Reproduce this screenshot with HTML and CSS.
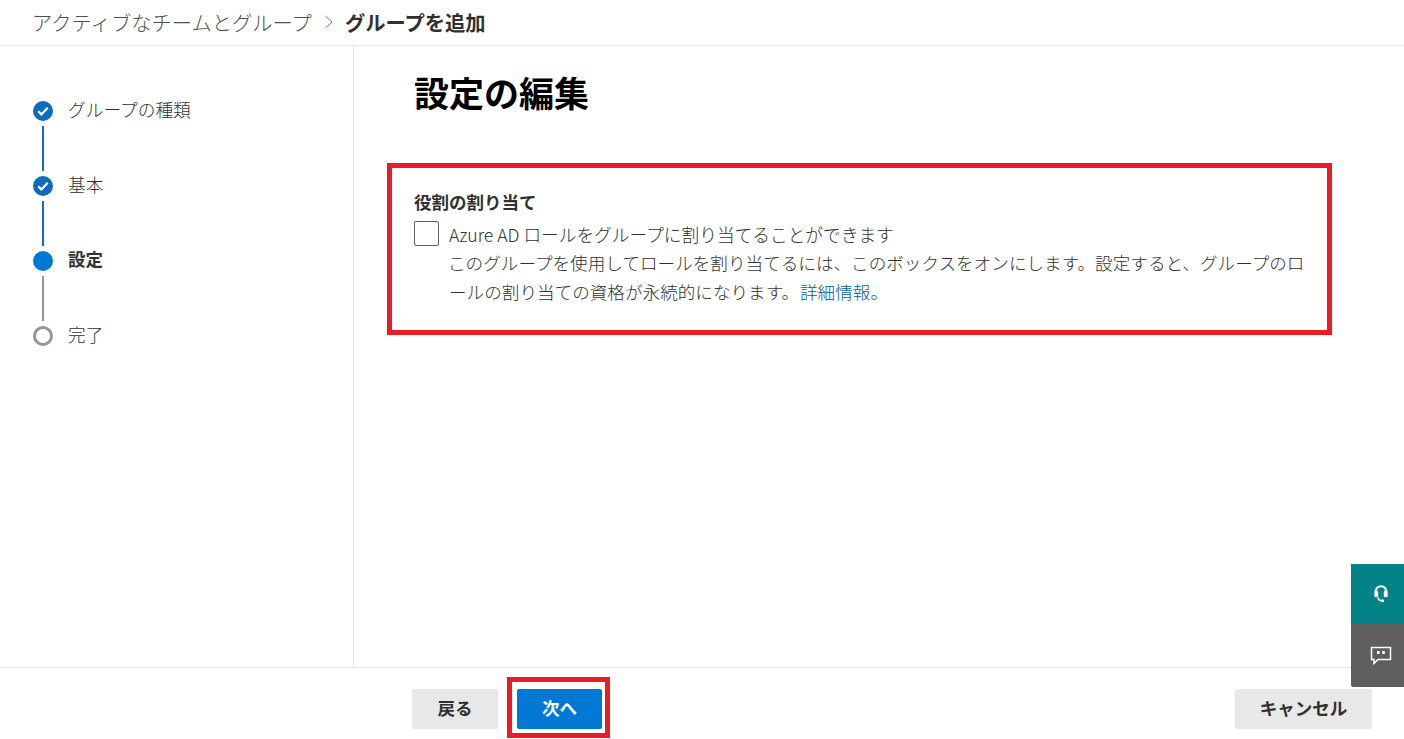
FILE: index.html
```html
<!DOCTYPE html>
<html lang="ja">
<head>
<meta charset="utf-8">
<title>グループを追加</title>
<link rel="stylesheet" href="styles.css">
</head>
<body>
<div class="app">
  <header class="crumbs">
    <span class="crumb-link">アクティブなチームとグループ</span>
    <svg class="crumb-sep" width="10" height="14" viewBox="0 0 10 14"><path d="M1.5 1l6.5 6-6.5 6" fill="none" stroke="#777" stroke-width="1"/></svg>
    <span class="crumb-current">グループを追加</span>
  </header>
  <div class="middle">
    <nav class="steps">
      <div class="step done">
        <span class="dot"><svg width="14" height="14" viewBox="0 0 14 14"><path d="M2.2 7.2l3.2 3.2 6.3-6.6" fill="none" stroke="#fff" stroke-width="2.2"/></svg></span>
        <span class="label">グループの種類</span>
      </div>
      <div class="line blue"></div>
      <div class="step done">
        <span class="dot"><svg width="14" height="14" viewBox="0 0 14 14"><path d="M2.2 7.2l3.2 3.2 6.3-6.6" fill="none" stroke="#fff" stroke-width="2.2"/></svg></span>
        <span class="label">基本</span>
      </div>
      <div class="line blue"></div>
      <div class="step current">
        <span class="dot"></span>
        <span class="label">設定</span>
      </div>
      <div class="line grey"></div>
      <div class="step todo">
        <span class="dot"></span>
        <span class="label">完了</span>
      </div>
    </nav>
    <main class="content">
      <h1 class="title">設定の編集</h1>
      <section class="highlight">
        <h2 class="field-title">役割の割り当て</h2>
        <div class="check-row">
          <span class="checkbox"></span>
          <div class="check-text">
            <div class="check-label">Azure AD ロールをグループに割り当てることができます</div>
            <p class="check-desc">このグループを使用してロールを割り当てるには、このボックスをオンにします。設定すると、グループのロールの割り当ての資格が永続的になります。 <a class="link">詳細情報。</a></p>
          </div>
        </div>
      </section>
    </main>
  </div>
  <footer class="footer">
    <div class="nav-buttons">
      <button class="btn">戻る</button>
      <span class="next-mark"><button class="btn primary">次へ</button></span>
    </div>
    <button class="btn cancel">キャンセル</button>
  </footer>
  <div class="side-tabs">
    <div class="tab teal">
      <svg width="18" height="22" viewBox="0 0 18 22"><path d="M3.6 14V8.6a5.4 5.4 0 0 1 10.8 0V14" fill="none" stroke="#fff" stroke-width="2"/><rect x="2.6" y="7.6" width="3.6" height="6.6" rx="1.4" fill="#fff"/><rect x="11.8" y="7.6" width="3.6" height="6.6" rx="1.4" fill="#fff"/><path d="M6 14.4c.3 2.4 1.6 3.4 4 3.4" fill="none" stroke="#fff" stroke-width="1.6"/><circle cx="10.6" cy="17.8" r="1.5" fill="#fff"/></svg>
    </div>
    <div class="tab grey-tab">
      <svg width="22" height="20" viewBox="0 0 22 20"><path d="M1.5 1.5h19v12H8l-4 4v-4H1.5z" fill="none" stroke="#fff" stroke-width="1.5"/><rect x="7" y="5" width="2.6" height="3" fill="#fff"/><rect x="12.2" y="5" width="2.6" height="3" fill="#fff"/></svg>
    </div>
  </div>
</div>
</body>
</html>
```
FILE: styles.css
```css
* { box-sizing: border-box; }
html, body { margin: 0; height: 100%; }
body {
  font-family: "Noto Sans CJK JP", "Noto Sans", sans-serif;
  color: #323130;
  background: #fff;
  overflow: hidden;
}
.app {
  position: relative;
  height: 739px;
  display: flex;
  flex-direction: column;
}
.crumbs {
  height: 46px;
  flex: none;
  border-bottom: 1px solid #e6e6e6;
  display: flex;
  align-items: center;
  padding: 0 0 2px 32px;
  font-size: 20.3px;
  line-height: 28px;
}
.crumb-link { color: #4f4e4d; font-weight: 300; }
.crumb-sep { margin: 0 11px 0 12px; }
.crumb-current { font-weight: 700; }
.middle { flex: 1; display: flex; min-height: 0; }
.steps {
  width: 354px;
  flex: none;
  border-right: 1px solid #e6e6e6;
  padding: 55px 0 0 33px;
  display: flex;
  flex-direction: column;
}
.step { display: flex; align-items: center; height: 20px; }
.dot {
  width: 20px;
  height: 20px;
  border-radius: 50%;
  background: #0f6cbd;
  display: flex;
  align-items: center;
  justify-content: center;
  flex: none;
}
.current .dot { background: #0078d4; }
.todo .dot { background: #fff; border: 3px solid #979593; }
.label {
  margin-left: 15px;
  font-size: 17.7px;
  line-height: 20px;
  font-weight: 300;
  position: relative;
  top: -2px;
}
.current .label { font-weight: 700; font-size: 17.5px; }
.line { width: 2px; height: 45px; margin: 5px 0 5px 9px; }
.line.blue { background: #106ebe; }
.line.grey { background: #979593; }
.content { flex: 1; padding: 0 0 0 33px; min-width: 0; }
.title {
  margin: 21px 0 0 27px;
  font-size: 35px;
  line-height: 50px;
  font-weight: 700;
  color: #000;
}
.highlight {
  width: 945px;
  height: 172px;
  margin-top: 46px;
  border: 5px solid #ed1c24;
  padding: 21px 22px 0;
}
.field-title {
  margin: 0;
  font-size: 17.5px;
  line-height: 25px;
  font-weight: 700;
}
.check-row { display: flex; margin-top: 6px; }
.checkbox {
  width: 25px;
  height: 25px;
  flex: none;
  border: 1px solid #605e5c;
  border-radius: 2px;
  margin-top: 1px;
}
.check-text { margin-left: 10px; width: 860px; }
.check-label {
  font-size: 17.7px;
  line-height: 29px;
  font-weight: 300;
}
.check-desc {
  margin: 0;
  font-size: 17.6px;
  line-height: 28.5px;
  font-weight: 300;
  text-indent: -1px;
}
.link { color: #005a9e; font-weight: 300; margin-left: -3px; }
.footer {
  height: 72px;
  flex: none;
  border-top: 1px solid #e6e6e6;
  display: flex;
  align-items: flex-start;
  justify-content: space-between;
  padding: 21px 32px 0 412px;
}
.nav-buttons { display: flex; align-items: flex-start; gap: 19px; }
.btn {
  width: 86px;
  height: 40px;
  border: none;
  border-radius: 2px;
  background: #e8e8e8;
  color: #323130;
  font-family: inherit;
  font-size: 17.5px;
  font-weight: 700;
  padding: 0 0 3px;
}
.btn.primary { background: #0078d4; color: #fff; display: block; width: 85px; }
.btn.cancel { width: 137px; }
.next-mark {
  display: block;
  border: 5px solid #ed1c24;
  padding: 7px 3px 4px 5px;
  margin: -12px 0 0 -10px;
}
.side-tabs {
  position: absolute;
  right: 0;
  top: 564px;
  width: 53px;
}
.tab { height: 60px; display: flex; align-items: center; justify-content: center; padding-left: 6px; }
.teal { background: #038387; }
.grey-tab { height: 63px; background: #605e5c; border-bottom-left-radius: 2px; }
```
